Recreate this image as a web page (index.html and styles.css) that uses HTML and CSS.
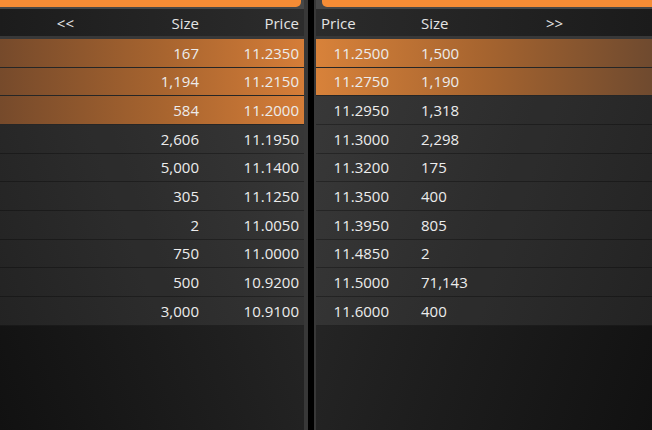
FILE: index.html
```html
<!DOCTYPE html>
<html>
<head>
<meta charset="utf-8">
<link rel="stylesheet" href="styles.css">
</head>
<body>
<div class="book">
  <section class="panel bids">
    <div class="btn-wrap"><div class="btn"></div></div>
    <div class="head">
      <span class="c1">&lt;&lt;</span><span class="c2">Size</span><span class="c3">Price</span>
    </div>
    <div class="rows">
      <div class="row hi"><span class="c1"></span><span class="c2">167</span><span class="c3">11.2350</span></div>
      <div class="row hi"><span class="c1"></span><span class="c2">1,194</span><span class="c3">11.2150</span></div>
      <div class="row hi"><span class="c1"></span><span class="c2">584</span><span class="c3">11.2000</span></div>
      <div class="row"><span class="c1"></span><span class="c2">2,606</span><span class="c3">11.1950</span></div>
      <div class="row"><span class="c1"></span><span class="c2">5,000</span><span class="c3">11.1400</span></div>
      <div class="row"><span class="c1"></span><span class="c2">305</span><span class="c3">11.1250</span></div>
      <div class="row"><span class="c1"></span><span class="c2">2</span><span class="c3">11.0050</span></div>
      <div class="row"><span class="c1"></span><span class="c2">750</span><span class="c3">11.0000</span></div>
      <div class="row"><span class="c1"></span><span class="c2">500</span><span class="c3">10.9200</span></div>
      <div class="row"><span class="c1"></span><span class="c2">3,000</span><span class="c3">10.9100</span></div>
    </div>
  </section>
  <section class="panel asks">
    <div class="btn-wrap"><div class="btn"></div></div>
    <div class="head">
      <span class="c1">Price</span><span class="c2">Size</span><span class="c3">&gt;&gt;</span>
    </div>
    <div class="rows">
      <div class="row hi"><span class="c1">11.2500</span><span class="c2">1,500</span><span class="c3"></span></div>
      <div class="row hi"><span class="c1">11.2750</span><span class="c2">1,190</span><span class="c3"></span></div>
      <div class="row"><span class="c1">11.2950</span><span class="c2">1,318</span><span class="c3"></span></div>
      <div class="row"><span class="c1">11.3000</span><span class="c2">2,298</span><span class="c3"></span></div>
      <div class="row"><span class="c1">11.3200</span><span class="c2">175</span><span class="c3"></span></div>
      <div class="row"><span class="c1">11.3500</span><span class="c2">400</span><span class="c3"></span></div>
      <div class="row"><span class="c1">11.3950</span><span class="c2">805</span><span class="c3"></span></div>
      <div class="row"><span class="c1">11.4850</span><span class="c2">2</span><span class="c3"></span></div>
      <div class="row"><span class="c1">11.5000</span><span class="c2">71,143</span><span class="c3"></span></div>
      <div class="row"><span class="c1">11.6000</span><span class="c2">400</span><span class="c3"></span></div>
    </div>
  </section>
</div>
</body>
</html>
```
FILE: styles.css
```css
html, body {
  margin: 0;
  padding: 0;
  background: #000;
}
body {
  width: 652px;
  height: 430px;
  overflow: hidden;
  font-family: "Open Sans", "DejaVu Sans", sans-serif;
  font-size: 15px;
  color: #ececec;
}
.book {
  display: flex;
  gap: 6px;
  height: 430px;
  background: #000;
}
.panel {
  display: flex;
  flex-direction: column;
  background: #383838;
}
.bids {
  width: 308px;
  padding-right: 4px;
  box-sizing: border-box;
}
.asks {
  flex: 1;
  padding-left: 2px;
}
.btn-wrap {
  height: 7px;
  padding-bottom: 2px;
  background: #474747;
}
.btn {
  height: 7px;
  background: #f68c35;
}
.bids .btn {
  margin-right: 3px;
  border-radius: 0 0 5px 0;
}
.asks .btn {
  margin-left: 6px;
  border-radius: 0 0 0 5px;
}
.head {
  height: 27px;
  display: grid;
  align-items: center;
  margin-bottom: 3px;
  color: #e4e4e4;
}
.bids .head {
  background: linear-gradient(90deg, #1c1c1c, #2c2c2c);
}
.asks .head {
  background: linear-gradient(90deg, #2b2b2b, #1b1b1b);
}
.rows {
  flex: 1;
}
.bids .rows {
  background: linear-gradient(70deg, #111 0%, #1c1c1c 45%, #2a2a2a 100%);
}
.asks .rows {
  background: linear-gradient(290deg, #111 0%, #1c1c1c 45%, #2a2a2a 100%);
}
.row {
  height: 27.67px;
  display: grid;
  align-items: center;
  border-bottom: 1px solid rgba(0, 0, 0, 0.3);
  background: rgba(255, 255, 255, 0.07);
}
.row.hi {
  border-bottom-color: #262626;
}
.bids .head, .bids .row {
  grid-template-columns: 100px 100px 100px;
}
.asks .head, .asks .row {
  grid-template-columns: 100px 100px 1fr;
}
.bids .row.hi {
  background: linear-gradient(90deg, #764a2b 0%, #a9652f 55%, #d57d38 100%);
}
.asks .row.hi {
  background: linear-gradient(90deg, #d8823a 0%, #a6642f 50%, #6f4a2f 100%);
}
.bids .c1 {
  text-align: right;
  padding-right: 26px;
}
.bids .c2, .bids .c3 {
  text-align: right;
  padding-right: 1px;
}
.asks .head .c1 {
  padding-left: 5px;
}
.asks .row .c1 {
  text-align: right;
  padding-right: 27px;
}
.asks .c2 {
  padding-left: 5px;
}
.asks .c3 {
  padding-left: 30px;
}
```
